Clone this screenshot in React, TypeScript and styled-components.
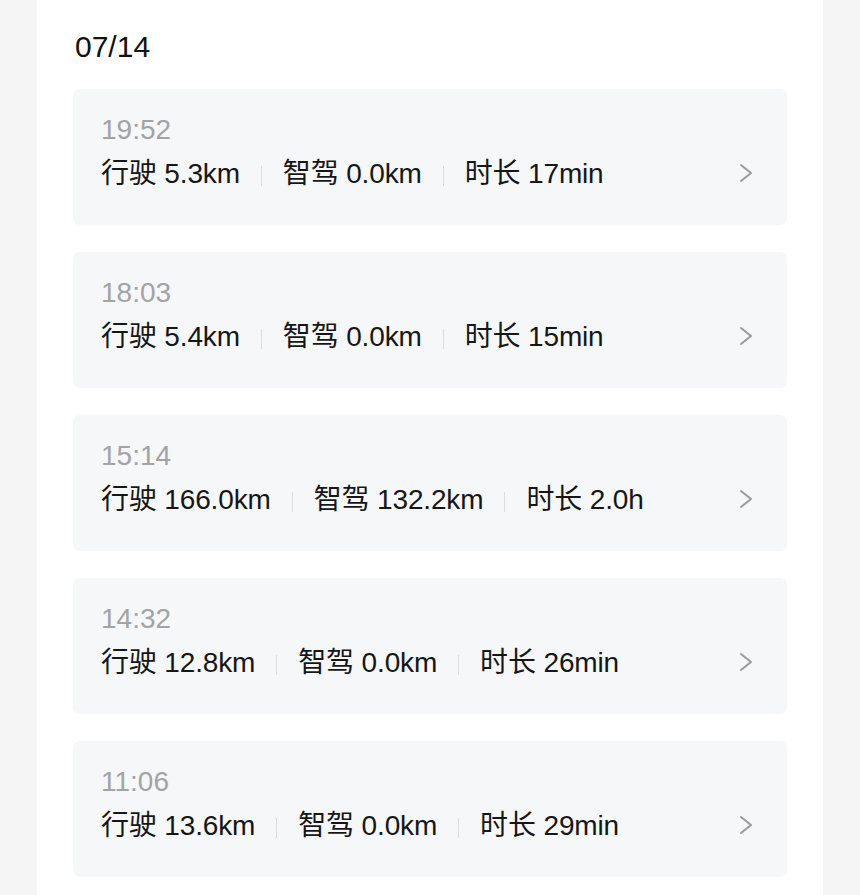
import React from 'react';
import styled, { createGlobalStyle } from 'styled-components';

const GlobalStyle = createGlobalStyle`
  html, body {
    margin: 0;
    padding: 0;
    background: #ffffff;
  }
  body {
    font-family: "Liberation Sans", "Noto Sans CJK SC", sans-serif;
    -webkit-font-smoothing: antialiased;
  }
`;

const Page = styled.div`
  margin-top: 7px;
  background: #f5f5f5;
  padding: 0 37px;
  min-height: 888px;
`;

const Panel = styled.div`
  background: #ffffff;
  margin-top: -7px;
  padding: 27px 36px 20px;
  min-height: 868px;
`;

const DateTitle = styled.div`
  font-size: 30px;
  line-height: 40px;
  color: #111111;
  padding-left: 2px;
  margin-bottom: 22px;
`;

const List = styled.div`
  display: flex;
  flex-direction: column;
  gap: 27px;
`;

const Card = styled.div`
  height: 136px;
  box-sizing: border-box;
  background: #f6f7f9;
  border-radius: 7px;
  padding: 21px 34px 0 28px;
  display: flex;
  align-items: flex-start;
`;

const CardBody = styled.div`
  flex: 1;
  display: flex;
  flex-direction: column;
  gap: 4px;
`;

const Time = styled.div`
  font-size: 28px;
  line-height: 40px;
  color: #a3a3a3;
`;

const Stats = styled.div`
  display: flex;
  align-items: center;
  font-size: 28px;
  line-height: 40px;
  letter-spacing: -0.15px;
  color: #161616;
`;

const Sep = styled.span`
  width: 1px;
  height: 20px;
  background: #dcdcdc;
  margin: 4px 21px 0;
`;

const Chevron = styled.svg`
  width: 14px;
  height: 20px;
  margin-top: 53px;
`;

type Trip = { time: string; drive: string; smart: string; dur: string };

const trips: Trip[] = [
  { time: '19:52', drive: '5.3km', smart: '0.0km', dur: '17min' },
  { time: '18:03', drive: '5.4km', smart: '0.0km', dur: '15min' },
  { time: '15:14', drive: '166.0km', smart: '132.2km', dur: '2.0h' },
  { time: '14:32', drive: '12.8km', smart: '0.0km', dur: '26min' },
  { time: '11:06', drive: '13.6km', smart: '0.0km', dur: '29min' },
];

const TripCard = ({ trip }: { trip: Trip }) => (
  <Card>
    <CardBody>
      <Time>{trip.time}</Time>
      <Stats>
        <span>行驶 {trip.drive}</span>
        <Sep />
        <span>智驾 {trip.smart}</span>
        <Sep />
        <span>时长 {trip.dur}</span>
      </Stats>
    </CardBody>
    <Chevron viewBox="0 0 14 20">
      <polyline
        points="2,2 12,10 2,18"
        fill="none"
        stroke="#9a9a9a"
        strokeWidth="2"
        strokeLinecap="round"
        strokeLinejoin="round"
      />
    </Chevron>
  </Card>
);

export default function App() {
  return (
    <>
      <GlobalStyle />
      <Page>
        <Panel>
          <DateTitle>07/14</DateTitle>
          <List>
            {trips.map(t => (
              <TripCard key={t.time} trip={t} />
            ))}
          </List>
        </Panel>
      </Page>
    </>
  );
}
